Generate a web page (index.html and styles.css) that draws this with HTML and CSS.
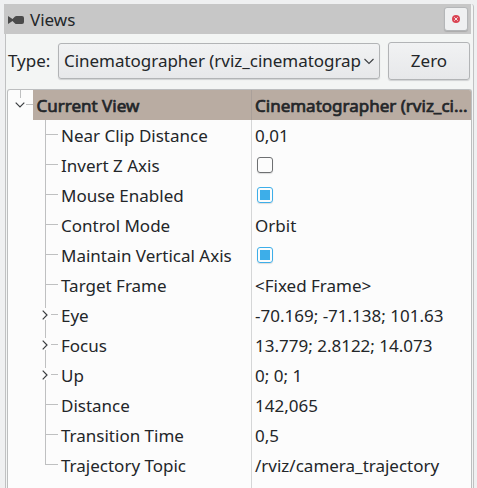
FILE: index.html
```html
<!DOCTYPE html>
<html lang="en">
<head>
<meta charset="utf-8">
<title>Views</title>
<link rel="stylesheet" href="styles.css">
</head>
<body>
<main class="dock">
  <header class="titlebar">
    <svg class="camera" width="16" height="8" viewBox="0 0 16 8"><path d="M0 0l4.500 3L7 .5Q7.500 0 8.500 0H14q2 0 2 2v4q0 2-2 2H8.500Q7.500 8 7 7.500L4.500 5 0 8z" fill="#4a4a4a"/></svg>
    <span class="title">Views</span>
    <button class="close" aria-label="Close"><svg width="8" height="8" viewBox="0 0 8 8"><circle cx="4" cy="4" r="4" fill="#da4453"/><path d="M2.300 2.300l3.400 3.400M5.700 2.300L2.300 5.700" stroke="#f6dfe2" stroke-width="1"/></svg></button>
  </header>
  <section class="panel">
    <div class="toolbar">
      <span class="label">Type:</span>
      <div class="combo"><span class="combo-text">Cinematographer (rviz_cinematograp</span><svg width="12" height="7" viewBox="0 0 12 7"><path d="M1.500 1l4.500 4.500L10.500 1" fill="none" stroke="#3b3e41" stroke-width="1.100"/></svg></div>
      <button class="zero">Zero</button>
    </div>
    <div class="tree">
      <div class="row head"><span class="branch root"><svg width="10" height="6" viewBox="0 0 10 6"><path d="M.7.700L5 5 9.300.700" fill="none" stroke="#3b3e41" stroke-width="1.200"/></svg></span><span class="name">Current View</span><span class="value">Cinematographer (rviz_ci...</span></div>
      <div class="row"><span class="branch"></span><span class="name">Near Clip Distance</span><span class="value">0,01</span></div>
      <div class="row"><span class="branch"></span><span class="name">Invert Z Axis</span><span class="value"><i class="check"></i></span></div>
      <div class="row"><span class="branch"></span><span class="name">Mouse Enabled</span><span class="value"><i class="check on"></i></span></div>
      <div class="row"><span class="branch"></span><span class="name">Control Mode</span><span class="value">Orbit</span></div>
      <div class="row"><span class="branch"></span><span class="name">Maintain Vertical Axis</span><span class="value"><i class="check on"></i></span></div>
      <div class="row"><span class="branch"></span><span class="name">Target Frame</span><span class="value">&lt;Fixed Frame&gt;</span></div>
      <div class="row"><span class="branch closed"><svg width="6" height="10" viewBox="0 0 6 10"><path d="M.7.700L5 5 .7 9.300" fill="none" stroke="#3b3e41" stroke-width="1.200"/></svg></span><span class="name">Eye</span><span class="value">-70.169; -71.138; 101.63</span></div>
      <div class="row"><span class="branch closed"><svg width="6" height="10" viewBox="0 0 6 10"><path d="M.7.700L5 5 .7 9.300" fill="none" stroke="#3b3e41" stroke-width="1.200"/></svg></span><span class="name">Focus</span><span class="value">13.779; 2.8122; 14.073</span></div>
      <div class="row"><span class="branch closed"><svg width="6" height="10" viewBox="0 0 6 10"><path d="M.7.700L5 5 .7 9.300" fill="none" stroke="#3b3e41" stroke-width="1.200"/></svg></span><span class="name">Up</span><span class="value">0; 0; 1</span></div>
      <div class="row"><span class="branch"></span><span class="name">Distance</span><span class="value">142,065</span></div>
      <div class="row"><span class="branch"></span><span class="name">Transition Time</span><span class="value">0,5</span></div>
      <div class="row"><span class="branch last"></span><span class="name">Trajectory Topic</span><span class="value">/rviz/camera_trajectory</span></div>
    </div>
  </section>
</main>
</body>
</html>
```
FILE: styles.css
```css
* { box-sizing: border-box; }
body {
  margin: 0;
  height: 488px;
  overflow: hidden;
  background: #eff0f1;
  color: #232629;
  font: 17px/30px "Noto Sans", sans-serif;
}
button { font: inherit; color: inherit; padding: 0; }
svg { display: block; flex: none; }
.dock {
  display: flex;
  flex-direction: column;
  width: 474px;
  height: 488px;
  padding: 4px 0 0 4px;
}
.titlebar {
  display: flex;
  align-items: center;
  flex: none;
  height: 30px;
  padding-left: 4px;
  border-right: 1px solid #c0c1c2;
  border-top-right-radius: 3px;
  background: linear-gradient(#c7c7c7, #c7c7c7) 0 0 / 467px 100% no-repeat #f3f5f4;
}
.camera { margin-top: 2px; }
.title { margin-left: 6px; padding-top: 2px; line-height: 32px; }
.close {
  display: flex;
  align-items: center;
  justify-content: center;
  width: 24px;
  height: 24px;
  margin: 0 5px 0 auto;
  border: 1px solid #b4b6b8;
  border-radius: 3px;
  background: #eff0f1;
  box-shadow: 0 1px 1px #aaa;
}
.panel {
  display: flex;
  flex-direction: column;
  flex: 1;
  min-height: 0;
  margin-left: 1px;
  border: solid #c0c1c2;
  border-width: 0 1px;
  background: #f3f5f4;
}
.toolbar {
  display: flex;
  align-items: center;
  flex: none;
  height: 55px;
  padding: 0 3px 1px 2px;
}
.label { width: 50px; white-space: nowrap; }
.combo, .zero {
  border: 1px solid #b2b4b6;
  border-radius: 3px;
  background: linear-gradient(#f1f2f3, #e7e8ea);
  box-shadow: 0 1px 1px #d0d2d3;
}
.combo {
  display: flex;
  align-items: center;
  width: 322px;
  height: 36px;
  padding: 0 4px 0 5px;
}
.combo-text {
  margin-right: auto;
  white-space: nowrap;
  letter-spacing: -.03px;
}
.zero { width: 82px; height: 38px; margin-left: 8px; }
.tree {
  flex: 1;
  width: 465px;
  margin-left: 1px;
  border: 1px solid #bcbebf;
  border-bottom: 0;
  border-radius: 3px 3px 0 0;
  background: linear-gradient(#d5d6d7, #d5d6d7) 243px 0 / 1px 100% no-repeat #fcfcfc;
  overflow: hidden;
}
.row {
  display: grid;
  grid-template-columns: 50px 194px 1fr;
  grid-template-rows: 30px;
  line-height: 32px;
  white-space: nowrap;
}
.name, .value { padding-left: 3px; }
.branch {
  margin-left: 37px;
  background:
    linear-gradient(#bfc0c1, #bfc0c1) 0 0 / 1px 100% no-repeat,
    linear-gradient(#bfc0c1, #bfc0c1) 0 14px / 13px 1px no-repeat;
}
.branch.last {
  background-size: 1px 15px, 13px 1px;
}
.branch.closed {
  padding: 10px 0 0;
  background:
    linear-gradient(#bfc0c1, #bfc0c1) 0 0 / 1px 8px no-repeat,
    linear-gradient(#bfc0c1, #bfc0c1) 0 20px / 1px 10px no-repeat,
    linear-gradient(#bfc0c1, #bfc0c1) 6px 14px / 7px 1px no-repeat;
}
.branch.closed svg { margin-left: -3px; }
.head {
  grid-template-columns: 25px 219px 1fr;
  -webkit-text-stroke: .7px #232629;
}
.head .name, .head .value { background: #b9aca2; }
.head .name { padding-left: 3.5px; border-right: 1px solid #aaa09a; }
.branch.root {
  margin: 0;
  padding: 12px 0 0 7px;
  background:
    linear-gradient(#bfc0c1, #bfc0c1) 12px 0 / 1px 8px no-repeat,
    linear-gradient(#bfc0c1, #bfc0c1) 18px 14px / 7px 1px no-repeat;
}
.check {
  display: block;
  width: 16px;
  height: 16px;
  margin: 7px 0 0 2px;
  border: 1px solid #6e7072;
  border-radius: 3px;
  box-shadow: 0 1px 1px #ddd;
}
.check.on {
  border-color: #3daee9;
  background: linear-gradient(#3daee9, #3daee9) center / 10px 10px no-repeat;
}
```
